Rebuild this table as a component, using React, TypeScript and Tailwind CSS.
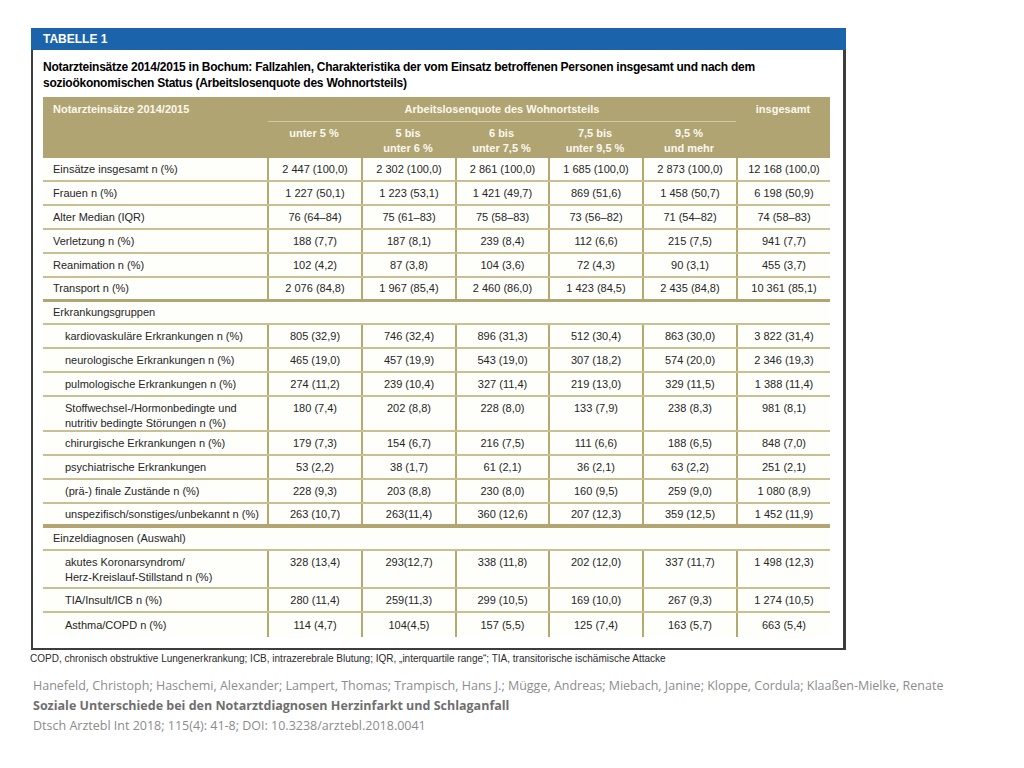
import React from 'react';

type Row = { label: string; values: string[]; sub?: boolean; h?: string; border: string };

const line = 'border-b-2 border-[#c9bf92]';
const thick = 'border-b-[3px] border-[#b2a571]';
const thicker = 'border-b-[4px] border-[#b2a571]';

const general: Row[] = [
  { label: 'Einsätze insgesamt n (%)', values: ['2 447 (100,0)', '2 302 (100,0)', '2 861 (100,0)', '1 685 (100,0)', '2 873 (100,0)', '12 168 (100,0)'], border: line },
  { label: 'Frauen n (%)', values: ['1 227 (50,1)', '1 223 (53,1)', '1 421 (49,7)', '869 (51,6)', '1 458 (50,7)', '6 198 (50,9)'], border: line },
  { label: 'Alter Median (IQR)', values: ['76 (64–84)', '75 (61–83)', '75 (58–83)', '73 (56–82)', '71 (54–82)', '74 (58–83)'], border: line },
  { label: 'Verletzung n (%)', values: ['188 (7,7)', '187 (8,1)', '239 (8,4)', '112 (6,6)', '215 (7,5)', '941 (7,7)'], border: line },
  { label: 'Reanimation n (%)', values: ['102 (4,2)', '87 (3,8)', '104 (3,6)', '72 (4,3)', '90 (3,1)', '455 (3,7)'], border: line },
  { label: 'Transport n (%)', values: ['2 076 (84,8)', '1 967 (85,4)', '2 460 (86,0)', '1 423 (84,5)', '2 435 (84,8)', '10 361 (85,1)'], border: thick },
];

const groups: Row[] = [
  { label: 'kardiovaskuläre Erkrankungen n (%)', values: ['805 (32,9)', '746 (32,4)', '896 (31,3)', '512 (30,4)', '863 (30,0)', '3 822 (31,4)'], sub: true, border: line },
  { label: 'neurologische Erkrankungen n (%)', values: ['465 (19,0)', '457 (19,9)', '543 (19,0)', '307 (18,2)', '574 (20,0)', '2 346 (19,3)'], sub: true, border: line },
  { label: 'pulmologische Erkrankungen n (%)', values: ['274 (11,2)', '239 (10,4)', '327 (11,4)', '219 (13,0)', '329 (11,5)', '1 388 (11,4)'], sub: true, border: line },
  { label: 'Stoffwechsel-/Hormonbedingte und\nnutritiv bedingte Störungen n (%)', values: ['180 (7,4)', '202 (8,8)', '228 (8,0)', '133 (7,9)', '238 (8,3)', '981 (8,1)'], sub: true, h: 'h-[35px]', border: line },
  { label: 'chirurgische Erkrankungen n (%)', values: ['179 (7,3)', '154 (6,7)', '216 (7,5)', '111 (6,6)', '188 (6,5)', '848 (7,0)'], sub: true, border: line },
  { label: 'psychiatrische Erkrankungen', values: ['53 (2,2)', '38 (1,7)', '61 (2,1)', '36 (2,1)', '63 (2,2)', '251 (2,1)'], sub: true, border: line },
  { label: '(prä-) finale Zustände n (%)', values: ['228 (9,3)', '203 (8,8)', '230 (8,0)', '160 (9,5)', '259 (9,0)', '1 080 (8,9)'], sub: true, border: line },
  { label: 'unspezifisch/sonstiges/unbekannt n (%)', values: ['263 (10,7)', '263(11,4)', '360 (12,6)', '207 (12,3)', '359 (12,5)', '1 452 (11,9)'], sub: true, border: thicker },
];

const diagnoses: Row[] = [
  { label: 'akutes Koronarsyndrom/\nHerz-Kreislauf-Stillstand n (%)', values: ['328 (13,4)', '293(12,7)', '338 (11,8)', '202 (12,0)', '337 (11,7)', '1 498 (12,3)'], sub: true, h: 'h-[38px]', border: line },
  { label: 'TIA/Insult/ICB n (%)', values: ['280 (11,4)', '259(11,3)', '299 (10,5)', '169 (10,0)', '267 (9,3)', '1 274 (10,5)'], sub: true, border: line },
  { label: 'Asthma/COPD n (%)', values: ['114 (4,7)', '104(4,5)', '157 (5,5)', '125 (7,4)', '163 (5,7)', '663 (5,4)'], sub: true, border: '' },
];

const widths = ['w-[94px]', 'w-[94px]', 'w-[93px]', 'w-[94px]', 'w-[94px]', 'w-[94px]'];

const DataRow = ({ row }: { row: Row }) => (
  <div className={`flex ${row.h ?? 'h-[24px]'} ${row.border}`}>
    <div
      className={`w-[224px] shrink-0 whitespace-pre-line leading-[15px] ${row.sub ? 'pl-[22px]' : 'pl-[10px]'} ${row.h ? 'pt-[4px]' : 'flex items-center'}`}
    >
      {row.label}
    </div>
    {row.values.map((v, i) => (
      <div
        key={i}
        className={`${widths[i]} shrink-0 border-l-2 border-[#b5a96f] flex justify-center leading-[15px] ${row.h ? 'pt-[4px]' : 'items-center'}`}
      >
        {v}
      </div>
    ))}
  </div>
);

const GroupRow = ({ label }: { label: string }) => (
  <div className={`h-[23px] flex items-center pl-[10px] ${line}`}>{label}</div>
);

export default function App() {
  const cols = [
    ['unter 5 %'],
    ['5 bis', 'unter 6 %'],
    ['6 bis', 'unter 7,5 %'],
    ['7,5 bis', 'unter 9,5 %'],
    ['9,5 %', 'und mehr'],
  ];

  return (
    <div className="w-[1024px] h-[768px] bg-white font-['Liberation_Sans',Arial,sans-serif] overflow-hidden">
      <div className="pl-[31px] pt-[28px]">
        <div className="w-[815px]">
          <div className="h-[22px] bg-[#1b64ab] flex items-center pl-[12px] text-white font-bold text-[12px]">
            TABELLE 1
          </div>
          <div className="border-l-[2px] border-r-[3px] border-b-[2px] border-[#3d3d3d] pl-[10px] pr-[13px] pt-[9px] pb-[11px]">
            <h1 className="font-bold text-[12px] leading-[16px] text-black tracking-[-0.25px]">
              Notarzteinsätze 2014/2015 in Bochum: Fallzahlen, Charakteristika der vom Einsatz betroffenen Personen insgesamt und nach dem
              <br />
              sozioökonomischen Status (Arbeitslosenquote des Wohnortsteils)
            </h1>

            <div className="mt-[6px] w-[787px] text-[11px] text-[#262626]">
              {/* header */}
              <div className="flex bg-[#b0a472] text-[#fbf8ee] font-bold text-[11px] h-[61px]">
                <div className="w-[224px] shrink-0 pl-[10px] h-[25px] flex items-center">Notarzteinsätze 2014/2015</div>
                <div className="w-[469px] shrink-0 flex flex-col">
                  <div className="h-[25px] flex items-center justify-center border-b border-[#d2c9a2] ml-[1px]">
                    Arbeitslosenquote des Wohnortsteils
                  </div>
                  <div className="flex">
                    {cols.map((c, i) => (
                      <div key={i} className={`${widths[i]} shrink-0 text-center leading-[15px] pt-[4px]`}>
                        {c.map((t) => (
                          <div key={t}>{t}</div>
                        ))}
                      </div>
                    ))}
                  </div>
                </div>
                <div className="w-[94px] shrink-0 h-[25px] flex items-center justify-center">insgesamt</div>
              </div>

              <div className="bg-[#fefefb]">
                {general.map((r) => (
                  <DataRow key={r.label} row={r} />
                ))}
                <GroupRow label="Erkrankungsgruppen" />
                {groups.map((r) => (
                  <DataRow key={r.label} row={r} />
                ))}
                <GroupRow label="Einzeldiagnosen (Auswahl)" />
                {diagnoses.map((r) => (
                  <DataRow key={r.label} row={r} />
                ))}
              </div>
            </div>
          </div>
          <p className="mt-[2px] -ml-[1px] text-[10px] leading-[13px] text-[#2b2b2b]">
            COPD, chronisch obstruktive Lungenerkrankung; ICB, intrazerebrale Blutung; IQR, „interquartile range“; TIA, transitorische ischämische Attacke
          </p>
        </div>
        <div className="mt-[11px] ml-[2px] font-['Open_Sans',sans-serif] text-[12.5px] leading-[20px] text-[#8c8c8c]">
          <div>Hanefeld, Christoph; Haschemi, Alexander; Lampert, Thomas; Trampisch, Hans J.; Mügge, Andreas; Miebach, Janine; Kloppe, Cordula; Klaaßen-Mielke, Renate</div>
          <div className="font-bold text-[#6f6f6f]">Soziale Unterschiede bei den Notarztdiagnosen Herzinfarkt und Schlaganfall</div>
          <div>Dtsch Arztebl Int 2018; 115(4): 41-8; DOI: 10.3238/arztebl.2018.0041</div>
        </div>
      </div>
    </div>
  );
}
